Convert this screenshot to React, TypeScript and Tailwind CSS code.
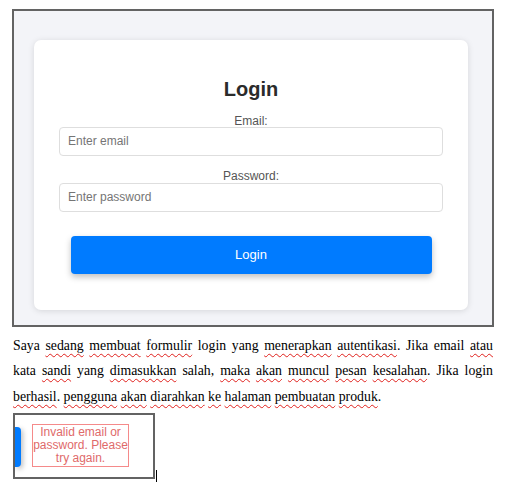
import React from 'react';

const para: [string, boolean][] = [
  ['Saya', false], ['sedang', true], ['membuat', true], ['formulir', true], ['login', false],
  ['yang', false], ['menerapkan', true], ['autentikasi', true], ['.', false], ['Jika', false],
  ['email', false], ['atau', true], ['kata', false], ['sandi', true], ['yang', false],
  ['dimasukkan', true], ['salah,', false], ['maka', true], ['akan', true], ['muncul', true],
  ['pesan', true], ['kesalahan', true], ['.', false], ['Jika', false], ['login', false],
  ['berhasil', true], ['.', false], ['pengguna', true], ['akan', true], ['diarahkan', true],
  ['ke', true], ['halaman', true], ['pembuatan', true], ['produk', true], ['.', false],
];

function Paragraph() {
  return (
    <p className="mt-[6px] pl-[13px] pr-[20px] text-justify text-[13.8px] leading-[25.3px] text-black" style={{ fontFamily: '"Liberation Serif", serif' }}>
      {para.map(([w, bad], i) => {
        const next = para[i + 1];
        const space = next && next[0] !== '.' ? ' ' : '';
        return (
          <React.Fragment key={i}>
            {bad ? (
              <span className="underline decoration-wavy decoration-[#e0201c] decoration-1 underline-offset-[3px]">{w}</span>
            ) : (
              w
            )}
            {space}
          </React.Fragment>
        );
      })}
    </p>
  );
}

function LoginShot() {
  return (
    <div className="ml-[12px] mr-[19px] mt-[9px] border-2 border-[#636363] bg-[#f3f4f8] pl-[20px] pr-[24px] pt-[29px] pb-[15px]">
      <div className="flex h-[270px] flex-col items-center rounded-[7px] bg-white px-[25px] shadow-[0_1px_6px_rgba(0,0,0,0.12)]">
        <h1 className="mt-[37px] h-[24px] text-[20px] font-bold leading-[24px] text-[#2b2b2b]">Login</h1>
        <label className="mt-[13px] h-[13px] text-[12px] leading-[14px] text-[#555]">Email:</label>
        <div className="h-[29px] w-full rounded-[4px] border border-[#dedede] bg-white px-[8px] text-[12px] leading-[27px] text-[#757575]">
          Enter email
        </div>
        <label className="mt-[13px] h-[14px] text-[12px] leading-[14px] text-[#555]">Password:</label>
        <div className="h-[29px] w-full rounded-[4px] border border-[#dedede] bg-white px-[8px] text-[12px] leading-[27px] text-[#757575]">
          Enter password
        </div>
        <button className="mt-[24px] h-[38px] w-[361px] rounded-[4px] bg-[#007bff] text-[13px] text-white shadow-[0_3px_6px_rgba(0,0,0,0.25)]">
          Login
        </button>
      </div>
    </div>
  );
}

function ErrorShot() {
  return (
    <div className="mx-[13px] mt-[4px] flex items-end">
      <div className="flex h-[66px] w-[142px] items-start border-2 border-[#636363] bg-white">
        <div className="mt-[12px] h-[40px] w-[6px] rounded-r-[4px] bg-[#007bff] shadow-[2px_2px_5px_rgba(0,0,0,0.25)]" />
        <div className="ml-[11px] mt-[9px] w-[97px] border border-[#f58a8a] py-[1px] text-center text-[12px] leading-[13px] text-[#e06a6a]">
          Invalid email or password. Please try again.
        </div>
      </div>
      <div className="mb-[-3px] ml-[1px] h-[12px] w-px bg-black" />
    </div>
  );
}

export default function App() {
  return (
    <div className="min-h-screen w-[513px] bg-white" style={{ fontFamily: '"Liberation Sans", Arial, sans-serif' }}>
      <LoginShot />
      <Paragraph />
      <ErrorShot />
    </div>
  );
}
